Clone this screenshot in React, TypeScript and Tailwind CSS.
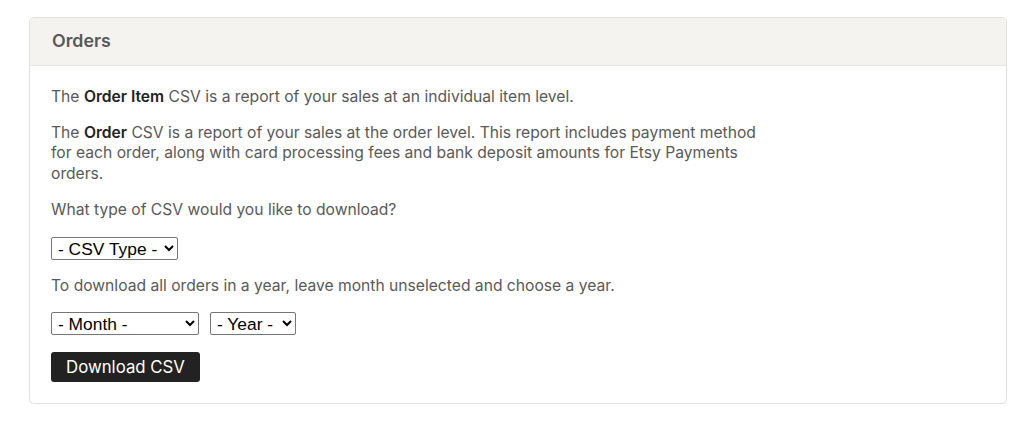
import React from "react";

const selFont = { fontFamily: "'Liberation Sans', Arial, sans-serif" };

export default function App() {
  return (
    <div className="min-h-[423px] w-[1024px] bg-white pt-[17px] pl-[29px] pr-[17px]" style={{ fontFamily: "Inter, 'Noto Sans', sans-serif" }}>
      <div className="w-[978px] rounded-[5px] border border-[#e1e0dc] overflow-hidden">
        <div className="h-[48px] bg-[#f4f3ef] border-b border-[#e8e7e3] flex items-center px-[22px]">
          <h2 className="text-[17.8px] font-semibold text-[#595959]">Orders</h2>
        </div>
        <div className="px-[21px] pt-[21px] pb-[21px] text-[15.65px] leading-[20.5px] text-[#595959]">
          <p>
            The <b className="font-semibold text-[#222222]">Order Item</b> CSV is a report of your sales at an individual item level.
          </p>
          <p className="mt-[15px] max-w-[712px]">
            The <b className="font-semibold text-[#222222]">Order</b> CSV is a report of your sales at the order level. This report includes payment method for each order, along with card processing fees and bank deposit amounts for Etsy Payments orders.
          </p>
          <p className="mt-[16px]">What type of CSV would you like to download?</p>
          <div className="mt-[16px] flex">
            <select className="w-[127px] h-[23px] border border-[#767676] rounded-[2px] bg-white text-black text-[17.4px] px-[2px]" style={selFont} defaultValue="">
              <option value="">- CSV Type -</option>
            </select>
          </div>
          <p className="mt-[16px]">To download all orders in a year, leave month unselected and choose a year.</p>
          <div className="mt-[16px] flex gap-[11px]">
            <select className="w-[148px] h-[23px] border border-[#767676] rounded-[2px] bg-white text-black text-[17.4px] px-[2px]" style={selFont} defaultValue="">
              <option value="">- Month -</option>
            </select>
            <select className="w-[86px] h-[23px] border border-[#767676] rounded-[2px] bg-white text-black text-[17.4px] px-[2px]" style={selFont} defaultValue="">
              <option value="">- Year -</option>
            </select>
          </div>
          <div className="mt-[17px] flex">
            <button className="h-[30px] w-[149px] rounded-[3px] bg-[#222222] text-white text-[16.8px]">Download CSV</button>
          </div>
        </div>
      </div>
    </div>
  );
}
